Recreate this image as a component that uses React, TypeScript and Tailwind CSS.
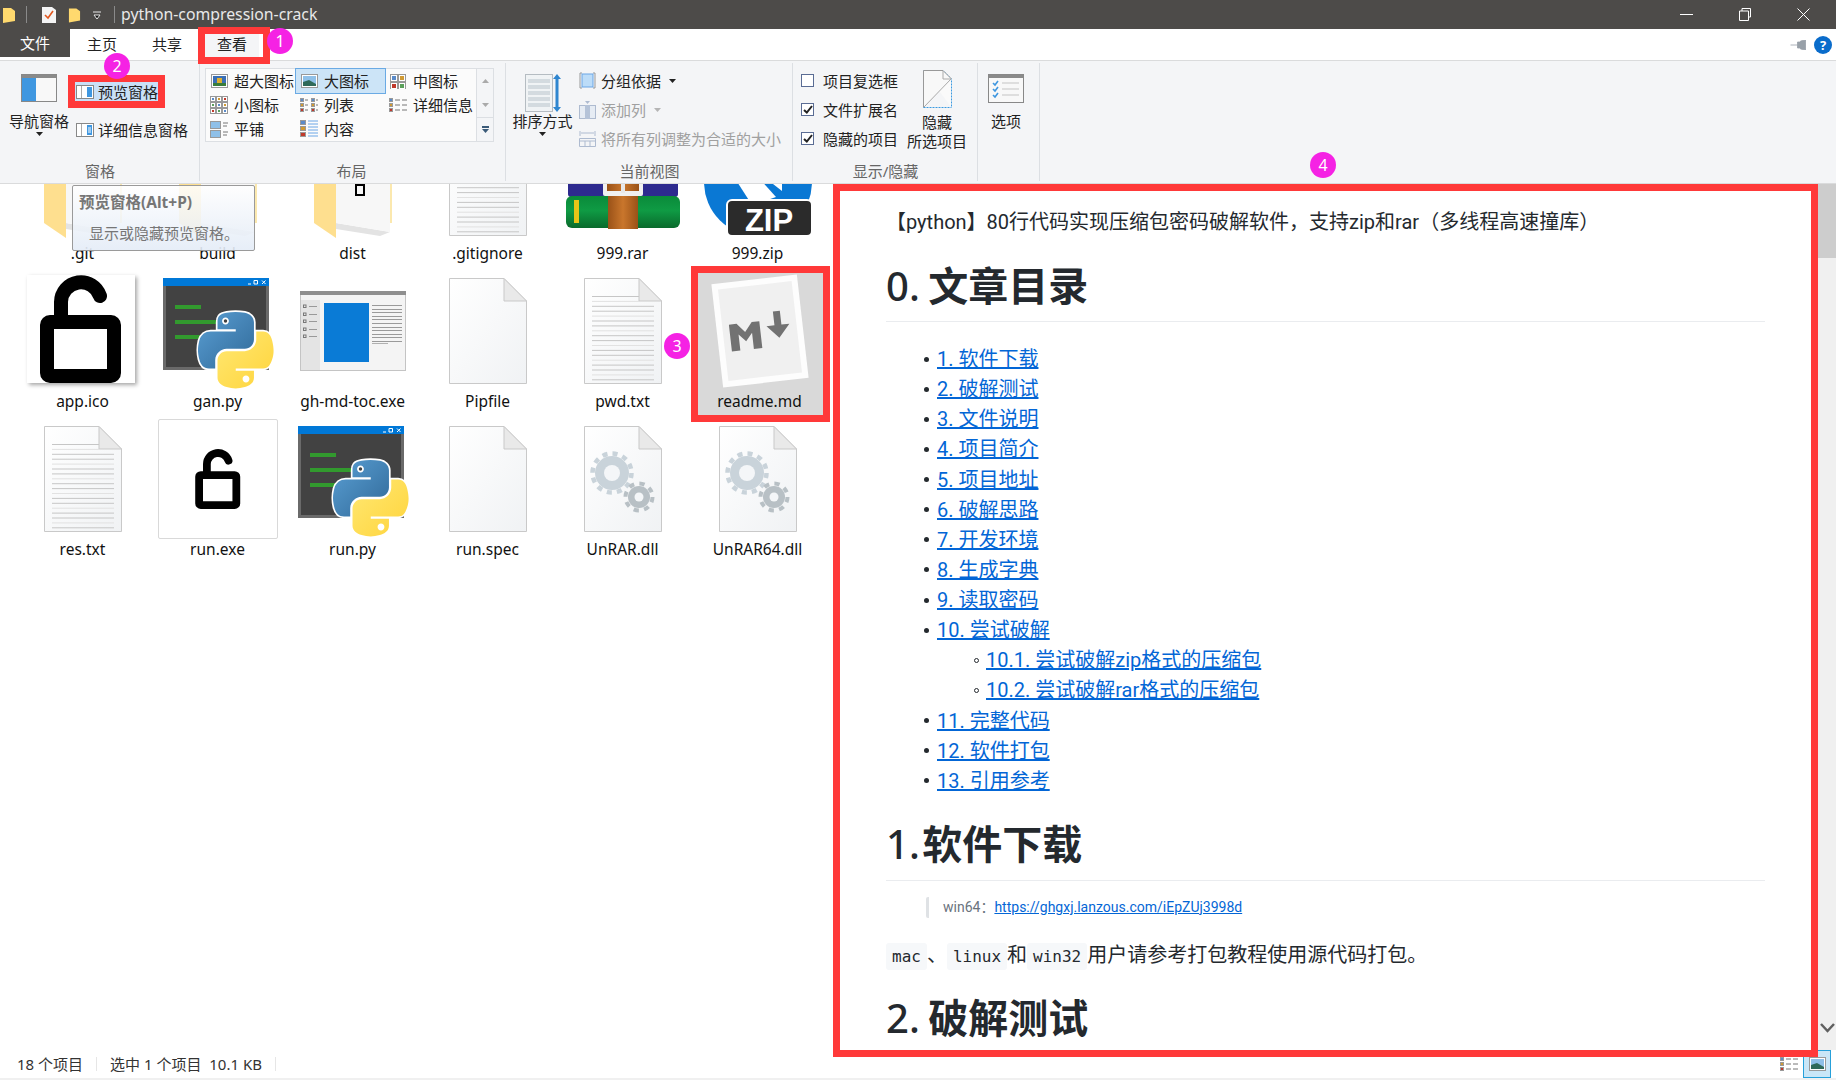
import React from 'react';

const tocItems = ['1. 软件下载', '2. 破解测试', '3. 文件说明', '4. 项目简介', '5. 项目地址', '6. 破解思路', '7. 开发环境', '8. 生成字典', '9. 读取密码', '10. 尝试破解'];
const tocTail = ['11. 完整代码', '12. 软件打包', '13. 引用参考'];

function Badge({ n, className }: { n: number; className: string }) {
  return (
    <div className={`absolute w-[26px] h-[26px] rounded-full bg-[#f522e4] text-white text-[16px] leading-[26px] text-center ${className}`}>{n}</div>
  );
}

function Doc({ lines, gears }: { lines?: boolean; gears?: boolean }) {
  const ys = Array.from({ length: 18 }, (_, i) => 18 + i * 4.9);
  return (
    <svg width="78" height="106" viewBox="0 0 78 106" className="mt-[5px]">
      <defs>
        <linearGradient id="docg" x1="0" y1="0" x2="1" y2="1">
          <stop offset="0" stopColor="#ffffff" />
          <stop offset="1" stopColor="#f0f2f4" />
        </linearGradient>
      </defs>
      <path d="M.5.5H55L77.5 23V105.5H.5Z" fill="url(#docg)" stroke="#c9c9c9" />
      {lines && ys.map((y, i) => <rect key={y} x="8" y={y} width={i < 2 ? 47 : 62} height="1" fill={i % 3 === 1 ? '#e2e2e2' : '#c6c6c6'} />)}
      <path d="M55 .5V23H77.5Z" fill="#e9e9e9" stroke="#c9c9c9" />
      {gears && (
        <g>
          <circle cx="28" cy="47" r="17" fill="#c9d3da" />
          <circle cx="28" cy="47" r="19.5" fill="none" stroke="#c9d3da" strokeWidth="4.5" strokeDasharray="5.1 5.1" />
          <circle cx="28" cy="47" r="8" fill="#f4f6f8" />
          <circle cx="55" cy="71" r="11" fill="#b8c0c5" />
          <circle cx="55" cy="71" r="13.5" fill="none" stroke="#b8c0c5" strokeWidth="4" strokeDasharray="5.3 5.3" />
          <circle cx="55" cy="71" r="4.5" fill="#f4f6f8" />
        </g>
      )}
    </svg>
  );
}

function Folder({ mark }: { mark?: boolean }) {
  return (
    <svg width="78" height="118" viewBox="0 0 78 118">
      <rect x="66" y="40" width="12" height="58" fill="#fbe8ae" />
      <path d="M22 98L76 107L66 111L22 104Z" fill="#e3e3e3" />
      <path d="M22 40H76V107L22 98Z" fill="#f7f7f7" />
      <path d="M0 40H22V113L0 98Z" fill="#fedf8f" />
      {mark && <rect x="42" y="60" width="8" height="10" fill="none" stroke="#000" strokeWidth="2" />}
    </svg>
  );
}

function Lock({ size }: { size: number }) {
  return (
    <svg width={size} height={size} viewBox="0 0 108 108">
      <rect x="20" y="47" width="67" height="54" rx="3" fill="#fff" stroke="#000" strokeWidth="14" />
      <path d="M34 42V27A20 20 0 0 1 73 21" fill="none" stroke="#000" strokeWidth="14" strokeLinecap="round" />
    </svg>
  );
}

function PyFile() {
  return (
    <svg width="112" height="112" viewBox="0 0 112 112" className="mt-[5px] ml-[2px]">
      <defs>
        <linearGradient id="pyb" x1="0" y1="0" x2="1" y2="1">
          <stop offset="0" stopColor="#5a9fd4" />
          <stop offset="1" stopColor="#306998" />
        </linearGradient>
        <linearGradient id="pyy" x1="0" y1="0" x2="1" y2="1">
          <stop offset="0" stopColor="#ffe873" />
          <stop offset="1" stopColor="#ffd43b" />
        </linearGradient>
      </defs>
      <rect x="0" y="0" width="106" height="92" fill="#6a6a6a" />
      <rect x="3" y="8" width="100" height="81" fill="#424242" />
      <rect x="0" y="0" width="106" height="8" fill="#0078d7" />
      <path d="M85 6h3M91 2.5h3.5v3.5h-3.5zM99 2.5l3.5 3.5m0-3.5l-3.5 3.5" stroke="#fff" strokeWidth="1" fill="none" />
      <rect x="12" y="27" width="26" height="4" fill="#329a2e" />
      <rect x="12" y="42" width="46" height="4" fill="#329a2e" />
      <rect x="12" y="57" width="36" height="4" fill="#329a2e" />
      <g transform="translate(35 34) scale(.68)">
        <path d="M54.919 0c-4.584.022-8.961.413-12.812 1.095C30.76 3.099 28.7 7.295 28.7 15.032v10.219h26.813v3.406H18.638c-7.793 0-14.616 4.684-16.75 13.594-2.462 10.213-2.571 16.586 0 27.25 1.906 7.938 6.458 13.594 14.25 13.594h9.219v-12.25c0-8.85 7.657-16.656 16.75-16.656h26.781c7.454 0 13.406-6.138 13.406-13.625v-25.531c0-7.266-6.13-12.725-13.406-13.937C64.281.328 59.502-.02 54.919 0zM40.419 8.22c2.77 0 5.031 2.299 5.031 5.125 0 2.816-2.262 5.094-5.031 5.094-2.779 0-5.031-2.277-5.031-5.094 0-2.826 2.252-5.125 5.031-5.125z" fill="url(#pyb)" stroke="#fff" strokeWidth="5" paintOrder="stroke" />
        <path d="M85.638 28.657v11.906c0 9.231-7.826 17-16.75 17H42.106c-7.336 0-13.406 6.278-13.406 13.625v25.531c0 7.266 6.319 11.54 13.406 13.625 8.487 2.496 16.626 2.947 26.781 0 6.75-1.954 13.406-5.888 13.406-13.625V86.5H55.513v-3.405H95.7c7.793 0 10.696-5.436 13.406-13.594 2.8-8.399 2.68-16.476 0-27.25-1.926-7.757-5.604-13.594-13.406-13.594H85.638zM70.575 93.32c2.779 0 5.031 2.277 5.031 5.094 0 2.826-2.252 5.125-5.031 5.125-2.77 0-5.031-2.299-5.031-5.125 0-2.816 2.262-5.094 5.031-5.094z" fill="url(#pyy)" stroke="#fff" strokeWidth="5" paintOrder="stroke" />
      </g>
    </svg>
  );
}

function ExeWindow() {
  return (
    <svg width="106" height="80" viewBox="0 0 106 80" className="mt-[18px]">
      <rect x=".5" y=".5" width="105" height="79" fill="#f4f4f4" stroke="#c4c4c4" />
      <rect x="0" y="0" width="106" height="4" fill="#8f8f8f" />
      <rect x="1" y="9" width="19" height="70" fill="#e4e4e4" />
      {[14, 22, 29, 37, 44].map((y) => (
        <g key={y}>
          <rect x="3.5" y={y} width="2.5" height="2.5" fill="none" stroke="#777" />
          <rect x="9" y={y + 1} width="8" height="1" fill="#999" />
        </g>
      ))}
      <rect x="24" y="12" width="45" height="59" fill="#0a7bd6" />
      {[14, 18, 21, 25, 28, 32, 36, 39, 43, 46, 50].map((y) => (
        <rect key={y} x="72" y={y} width="30" height="1" fill="#9a9a9a" />
      ))}
      <rect x="72" y="52" width="16" height="1" fill="#b0b0b0" />
    </svg>
  );
}

function Rar() {
  return (
    <svg width="116" height="112" viewBox="0 0 116 112">
      <defs>
        <linearGradient id="rarg" x1="0" y1="0" x2="0" y2="1">
          <stop offset="0" stopColor="#0a8a3a" />
          <stop offset=".45" stopColor="#0f9b44" />
          <stop offset="1" stopColor="#0a6a2c" />
        </linearGradient>
        <linearGradient id="raro" x1="0" y1="0" x2="1" y2="0">
          <stop offset="0" stopColor="#9a5218" />
          <stop offset=".5" stopColor="#c9762c" />
          <stop offset="1" stopColor="#9a5218" />
        </linearGradient>
      </defs>
      <rect x="3" y="55" width="110" height="17" rx="3" fill="#2d2a8f" />
      <rect x="1" y="71" width="114" height="32" rx="6" fill="url(#rarg)" />
      <rect x="9" y="75" width="5" height="23" fill="#e8c518" />
      <rect x="43" y="71" width="30" height="33" fill="url(#raro)" />
      <rect x="38" y="55" width="40" height="16" rx="2" fill="#f0f0f0" />
      <rect x="42" y="55" width="32" height="11" fill="url(#raro)" />
      <rect x="56" y="55" width="4" height="13" fill="#e8e8e8" />
    </svg>
  );
}

function Zip() {
  return (
    <svg width="108" height="112" viewBox="0 0 108 112">
      <circle cx="54" cy="57" r="54" fill="#0a78d4" />
      <path d="M30 52L54 52L72 72L48 80Z" fill="#fff" />
      <path d="M60 52L78 52L78 66Z" fill="#fff" />
      <rect x="23" y="75" width="85" height="36" rx="5" fill="#2b2b2b" stroke="#fff" strokeWidth="2" />
      <text x="65" y="106" textAnchor="middle" fontFamily="Liberation Sans" fontWeight="700" fontSize="31" fill="#fff">ZIP</text>
    </svg>
  );
}

function Md() {
  return (
    <svg width="100" height="116" viewBox="0 0 100 116">
      <g transform="translate(50 58) rotate(-6.5)">
        <rect x="-43" y="-52" width="86" height="104" fill="#fdfdfd" />
        <rect x="-37" y="-46" width="74" height="92" fill="#f0f0f0" />
        <path d="M-32 30V-5H-23L-14 7L-5 -5H4V30H-6V9L-14 19L-22 9V30Z" fill="#727272" transform="translate(-3 -6) scale(.85 .77)" />
        <path d="M15 -18H22V-4H30L18.5 9L7 -4H15Z" fill="#727272" />
      </g>
    </svg>
  );
}

function Cell({ name, selected, children }: { name: string; selected?: boolean; children: React.ReactNode }) {
  return (
    <div className={`${selected ? 'bg-[#d9d9d9] w-[129px]' : 'w-[125px]'} h-[142px] flex flex-col items-center`}>
      <div className="h-[118px] w-full flex justify-center items-start">{children}</div>
      <div className="leading-[20px] text-[15.5px] text-[#111]">{name}</div>
    </div>
  );
}

function Caret({ color = '#222' }: { color?: string }) {
  return (
    <svg width="7" height="4" viewBox="0 0 7 4"><path d="M0 0H7L3.5 4Z" fill={color} /></svg>
  );
}

function PaneIcon({ kind }: { kind: 'preview' | 'details' }) {
  return (
    <svg width="18" height="14" viewBox="0 0 18 14">
      <rect x=".5" y=".5" width="17" height="13" fill="#fff" stroke="#888" />
      <rect x="5" y="1" width="1" height="12" fill="#aaa" />
      <rect x="11" y="2" width="5" height="10" fill="#3f97e0" />
      {kind === 'details' && <path d="M12 5h3M12 7h3M12 9h3" stroke="#fff" />}
    </svg>
  );
}

function ViewIcon({ kind }: { kind: string }) {
  if (kind === 'xl' || kind === 'lg') {
    return (
      <svg width="17" height="14" viewBox="0 0 17 14">
        <rect x=".5" y=".5" width="16" height="13" fill="#fff" stroke="#999" />
        {kind === 'xl' ? (
          <g><rect x="2" y="2" width="13" height="10" fill="#3b6fb5" /><rect x="6" y="4" width="5" height="7" fill="#e0b030" /><rect x="2" y="9" width="13" height="3" fill="#3a7d3a" /></g>
        ) : (
          <g><rect x="2" y="2" width="13" height="10" fill="#8fc0e8" /><path d="M2 8L8 6L15 10V12H2Z" fill="#2f6a5a" /></g>
        )}
      </svg>
    );
  }
  const colors = ['#5b8bc9', '#d09a33', '#c0392b', '#5ba05b'];
  const grid = (n: number, s: number, gap: number) =>
    Array.from({ length: n * n }, (_, i) => (
      <rect key={i} x={(i % n) * (s + gap) + .5} y={Math.floor(i / n) * (s + gap) + .5} width={s} height={s} fill="#fff" stroke="#999" />
    ));
  if (kind === 'md') {
    return <svg width="17" height="15" viewBox="0 0 17 15">{grid(2, 7, 1)}{[0, 1, 2, 3].map((i) => <rect key={i} x={2 + (i % 2) * 8} y={2 + Math.floor(i / 2) * 8} width="4" height="4" fill={colors[i]} />)}</svg>;
  }
  if (kind === 'sm') {
    return <svg width="18" height="18" viewBox="0 0 18 18">{grid(3, 5, 1)}{Array.from({ length: 9 }, (_, i) => <rect key={i} x={2 + (i % 3) * 6} y={2 + Math.floor(i / 3) * 6} width="2" height="2" fill={colors[i % 4]} />)}</svg>;
  }
  const rows = [0, 1, 2];
  if (kind === 'list') {
    return <svg width="18" height="15" viewBox="0 0 18 15">{rows.map((r) => [0, 1].map((c) => <g key={`${r}${c}`}><rect x={c * 11 + .5} y={r * 5 + .5} width="3" height="3" fill={colors[r]} stroke="#999" /><path d={`M${c * 11 + 5} ${r * 5 + 2}h3`} stroke="#777" /></g>))}</svg>;
  }
  if (kind === 'details') {
    return <svg width="18" height="15" viewBox="0 0 18 15">{rows.map((r) => <g key={r}><rect x=".5" y={r * 5 + .5} width="3" height="3" fill={colors[r]} stroke="#999" /><path d={`M6 ${r * 5 + 2}h5M13 ${r * 5 + 2}h5`} stroke="#777" /></g>)}</svg>;
  }
  if (kind === 'tiles') {
    return <svg width="18" height="17" viewBox="0 0 18 17">{[0, 1].map((r) => <g key={r}><rect x=".5" y={r * 9 + .5} width="10" height="7" fill="#8fc0e8" stroke="#999" /><path d={`M13 ${r * 9 + 2}h5M13 ${r * 9 + 5}h4`} stroke="#777" /></g>)}</svg>;
  }
  return <svg width="18" height="18" viewBox="0 0 18 18">{rows.map((r) => <g key={r}><rect x=".5" y={r * 6 + .5} width="5" height="4" fill={colors[r]} stroke="#999" /><path d={`M8 ${r * 6 + 1}h10M8 ${r * 6 + 4}h10`} stroke="#6aa6e6" /></g>)}</svg>;
}

function ViewItem({ kind, label, active }: { kind: string; label: string; active?: boolean }) {
  return (
    <div className={`flex items-center h-[24px] pl-[3px] gap-[5px] whitespace-nowrap ${active ? 'bg-[#cce4f7] outline outline-[#6aaae4]' : ''}`}>
      <span className="w-[20px] flex justify-center"><ViewIcon kind={kind} /></span>
      <span>{label}</span>
    </div>
  );
}

function Check({ on, label }: { on?: boolean; label: string }) {
  return (
    <div className="flex items-center h-[29px] gap-[9px]">
      <span className="w-[13px] h-[13px] bg-white border border-[#5a6c94] flex items-center justify-center">
        {on && <svg width="10" height="9" viewBox="0 0 10 9"><path d="M1 5L3.8 7.5L9 1" fill="none" stroke="#222" strokeWidth="2" /></svg>}
      </span>
      <span>{label}</span>
    </div>
  );
}

function Group({ label, className, children }: { label: string; className: string; children: React.ReactNode }) {
  return (
    <div className={`relative h-full shrink-0 flex flex-col ${className}`}>
      <div className="flex-1 flex">{children}</div>
      <div className="h-[26px] pt-[2px] leading-[24px] text-center text-[#666]">{label}</div>
      <div className="absolute right-0 top-[2px] bottom-[2px] w-px bg-[#dcdfe3]" />
    </div>
  );
}

function Toc({ label }: { label: string }) {
  return (
    <li className="h-[30.14px] leading-[30px] flex items-center">
      <span className="w-[5px] h-[5px] rounded-full bg-[#24292e] mr-[8px] ml-[-12px]" />
      <a className="text-[#0366d6] underline">{label}</a>
    </li>
  );
}

function SubToc({ label }: { label: string }) {
  return (
    <li className="h-[30.14px] leading-[30px] flex items-center pl-[50px]">
      <span className="w-[5px] h-[5px] rounded-full border border-[#24292e] mr-[7px] ml-[-12px]" />
      <a className="text-[#0366d6] underline">{label}</a>
    </li>
  );
}

function Heading({ num, title, className, numClass }: { num: string; title: string; className: string; numClass: string }) {
  return (
    <h1 className={`leading-[50px] text-[40px] font-bold text-[#24292e] border-b border-[#eaecef] whitespace-nowrap ${className}`}>
      <span className={`font-medium ${numClass}`}>{num}</span> {title}
    </h1>
  );
}

function Chip({ children }: { children: React.ReactNode }) {
  return (
    <code className="inline-block h-[27px] leading-[27px] px-[6px] rounded-[3px] bg-[#f6f8fa] text-[16px] font-['DejaVu_Sans_Mono',monospace]">{children}</code>
  );
}

export default function App() {
  return (
    <div className="relative h-screen w-full overflow-hidden flex flex-col bg-white text-[15px] text-[#222] font-['Noto_Sans','Noto_Sans_CJK_SC',sans-serif]">
      {/* title bar */}
      <div className="h-[29px] shrink-0 bg-[#4d4b49] flex items-center text-[#e8e8e8]">
        <svg width="14" height="18" viewBox="0 0 14 18" className="ml-[2px]"><path d="M1 2H9L13 5V15L1 17Z" fill="#ffd96e" /></svg>
        <div className="w-px h-[17px] bg-[#8a8a8a] ml-[10px]" />
        <svg width="14" height="18" viewBox="0 0 14 18" className="ml-[15px]"><path d="M0 1H10L14 4V17H0Z" fill="#f4f4f4" /><path d="M3 9L6 12L11 5" fill="none" stroke="#e2571e" strokeWidth="1.6" /></svg>
        <svg width="13" height="18" viewBox="0 0 14 18" className="ml-[12px]"><path d="M1 2H9L13 5V15L1 17Z" fill="#ffd96e" /></svg>
        <svg width="8" height="8" viewBox="0 0 8 8" className="ml-[12px]"><path d="M0 1H8M1 4H7L4 8Z" stroke="#e8e8e8" strokeWidth="1" fill="#111" /></svg>
        <div className="w-px h-[17px] bg-[#8a8a8a] ml-[13px]" />
        <span className="ml-[6px] text-[15.8px]">python-compression-crack</span>
        <div className="ml-auto flex items-center pr-[26px] gap-[46px]">
          <svg width="13" height="13" viewBox="0 0 13 13"><path d="M0 6.5H13" stroke="#fff" /></svg>
          <svg width="12" height="13" viewBox="0 0 12 13"><path d="M.5 3H9.5V12.5H.5ZM3 3V.5H11.5V9H9.5" fill="none" stroke="#fff" /></svg>
          <svg width="13" height="13" viewBox="0 0 13 13"><path d="M.5.5L12.5 12.5M12.5.5L.5 12.5" stroke="#fff" /></svg>
        </div>
      </div>

      {/* tabs */}
      <div className="h-[32px] shrink-0 border-b border-[#dadbdc] flex bg-white">
        <div className="w-[70px] h-[28px] bg-[#4d4b49] text-white text-center leading-[28px]">文件</div>
        <div className="flex pt-[1px]">
          <div className="w-[64px] text-center leading-[28px]">主页</div>
          <div className="w-[66px] text-center leading-[28px]">共享</div>
          <div className="w-[54px] h-[30px] ml-[5px] text-center leading-[28px] bg-[#f4f5f7]">查看</div>
        </div>
        <div className="ml-auto flex items-center pr-[4px] gap-[7px]">
          <svg width="17" height="10" viewBox="0 0 16 10"><path d="M0 5H7M7 2H10V1L15 0V10L10 9V8H7Z" fill="#98a0a8" stroke="#98a0a8" strokeWidth=".8" /></svg>
          <div className="w-[18px] h-[18px] rounded-full bg-[#0a6ccb] text-white text-[13px] font-bold leading-[18px] text-center">?</div>
        </div>
      </div>

      {/* ribbon */}
      <div className="h-[123px] shrink-0 bg-[#f4f5f7] flex border-b border-[#dadbdc] leading-[20px]">
        <Group label="窗格" className="w-[200px]">
          <div className="w-[78px] flex flex-col items-center pt-[13px]">
            <svg width="36" height="28" viewBox="0 0 36 28">
              <rect x=".5" y=".5" width="35" height="27" fill="#f8f8f8" stroke="#888" />
              <rect x="1" y="1" width="34" height="3" fill="#8a8a8a" />
              <rect x="1" y="4" width="14" height="23" fill="#3f97e0" />
            </svg>
            <div className="mt-[9px]">导航窗格</div>
            <div className="mt-[1px] leading-[0]"><Caret /></div>
          </div>
          <div className="pt-[14px] flex flex-col ml-[-2px]">
            <div className="flex items-center gap-[4px] h-[33px] bg-[#c9e0f7] w-[83px] pl-[1px] ml-[-1px]"><PaneIcon kind="preview" /><span>预览窗格</span></div>
            <div className="flex items-center gap-[4px] h-[33px] mt-[5px] whitespace-nowrap"><PaneIcon kind="details" /><span>详细信息窗格</span></div>
          </div>
        </Group>

        <Group label="布局" className="w-[306px] pr-[3px]">
          <div className="pl-[5px] pt-[7px] flex items-start">
            <div className="w-[272px] h-[74px] bg-[#fbfbfb] border border-[#dcdfe3] grid grid-cols-[90px_89px_91px] grid-rows-[24px_24px_24px]">
              <ViewItem kind="xl" label="超大图标" />
              <ViewItem kind="lg" label="大图标" active />
              <ViewItem kind="md" label="中图标" />
              <ViewItem kind="sm" label="小图标" />
              <ViewItem kind="list" label="列表" />
              <ViewItem kind="details" label="详细信息" />
              <ViewItem kind="tiles" label="平铺" />
              <ViewItem kind="content" label="内容" />
            </div>
            <div className="w-[17px] h-[74px] border border-l-0 border-[#dcdfe3] flex flex-col items-center">
              <div className="h-[24px] flex items-center"><svg width="7" height="4" viewBox="0 0 7 4"><path d="M0 4H7L3.5 0Z" fill="#aaa" /></svg></div>
              <div className="h-[24px] flex items-center"><Caret color="#aaa" /></div>
              <div className="flex-1 w-full border-t border-[#dcdfe3] flex flex-col items-center justify-center gap-[1px]">
                <div className="w-[7px] h-[2px] bg-[#3a5a78]" />
                <Caret color="#3a5a78" />
              </div>
            </div>
          </div>
        </Group>

        <Group label="当前视图" className="w-[287px]">
          <div className="w-[73px] flex flex-col items-center pt-[13px]">
            <svg width="36" height="38" viewBox="0 0 36 38">
              <rect x=".5" y=".5" width="27" height="37" fill="#f0f3f5" stroke="#b5bcc2" />
              {[6, 12, 18, 24, 30].map((y) => <path key={y} d={`M3 ${y}H25M3 ${y + 2}H25`} stroke="#b7c2ca" />)}
              <path d="M32 0L36 5H33.5V33H36L32 38L28 33H30.5V5H28Z" fill="#2f86d0" />
            </svg>
            <div className="mt-[-1px] whitespace-nowrap">排序方式</div>
            <div className="mt-[1px] leading-[0]"><Caret /></div>
          </div>
          <div className="pt-[5px] whitespace-nowrap">
            <div className="flex items-center h-[29px] gap-[5px]">
              <svg width="17" height="17" viewBox="0 0 17 17"><path d="M3 1H1V16H3M14 1H16V16H14" fill="none" stroke="#999" /><rect x="3" y="2" width="11" height="13" fill="#bcdcf8" stroke="#6aa6e6" /></svg>
              <span>分组依据</span>
              <span className="ml-[3px] leading-[0]"><Caret /></span>
            </div>
            <div className="flex items-center h-[29px] gap-[5px] text-[#a0a0a0]">
              <svg width="17" height="18" viewBox="0 0 17 18"><rect x=".5" y="4.5" width="16" height="13" fill="#e6ecf4" stroke="#aebbd0" /><rect x="6" y="4" width="5" height="14" fill="#b5c3d8" /><path d="M6 0H11L8.5 3Z" fill="#aebbd0" /></svg>
              <span>添加列</span>
              <span className="ml-[3px] leading-[0]"><Caret color="#b5b5b5" /></span>
            </div>
            <div className="flex items-center h-[29px] gap-[5px] text-[#a0a0a0]">
              <svg width="17" height="17" viewBox="0 0 17 17"><path d="M1 1V6M16 1V6M2 3H15" stroke="#aebbd0" /><path d="M.5 8.5H16.5V16.5H.5ZM.5 11H16.5M6 11V16.5M11 11V16.5" fill="none" stroke="#aebbd0" /></svg>
              <span>将所有列调整为合适的大小</span>
            </div>
          </div>
        </Group>

        <Group label="显示/隐藏" className="w-[185px]">
          <div className="pl-[8px] pt-[5px] w-[113px] whitespace-nowrap">
            <Check label="项目复选框" />
            <Check on label="文件扩展名" />
            <Check on label="隐藏的项目" />
          </div>
          <div className="w-[62px] flex flex-col items-center pt-[9px] whitespace-nowrap">
            <svg width="29" height="38" viewBox="0 0 29 38">
              <path d="M.5.5H20L28.5 9V37.5" fill="#fafafa" stroke="#3b9ae1" strokeDasharray="2 1" />
              <path d="M.5 37.5V.5H20L28.5 9" fill="#f8f8f8" stroke="#999" />
              <path d="M.5 37.5H28.5" stroke="#3b9ae1" strokeDasharray="2 1" />
              <path d="M1 37L28 9M20 1V9H28" fill="none" stroke="#aaa" />
            </svg>
            <div className="mt-[5px] leading-[19px] text-center">隐藏<br />所选项目</div>
          </div>
        </Group>

        <Group label="" className="w-[62px] pr-[6px]">
          <div className="w-full flex flex-col items-center pt-[13px]">
            <svg width="36" height="29" viewBox="0 0 36 29">
              <rect x=".5" y=".5" width="35" height="28" fill="#f8f8f8" stroke="#888" />
              <rect x="1" y="1" width="34" height="3" fill="#8a8a8a" />
              {[9, 15, 21].map((y) => <g key={y}><path d={`M5 ${y}L7 ${y + 2}L10 ${y - 2}`} fill="none" stroke="#3f97e0" strokeWidth="1.6" /><path d={`M14 ${y}H31`} stroke="#c4c4c4" /></g>)}
            </svg>
            <div className="mt-[8px]">选项</div>
          </div>
        </Group>
      </div>

      {/* main */}
      <div className="flex-1 min-h-0 flex">
        <div className="w-[833px] shrink-0 overflow-hidden">
          <div className="mt-[-59px] pl-[20px] grid grid-cols-[repeat(6,125px)] grid-rows-[142px_142px_142px] gap-x-[10px] gap-y-[6px]">
            <Cell name=".git"><Folder /></Cell>
            <Cell name="build"><Folder /></Cell>
            <Cell name="dist"><Folder mark /></Cell>
            <Cell name=".gitignore"><Doc lines /></Cell>
            <Cell name="999.rar"><Rar /></Cell>
            <Cell name="999.zip"><Zip /></Cell>

            <Cell name="app.ico"><div className="mt-[2px] ml-[-3px] shadow-[2px_2px_4px_rgba(0,0,0,0.35)]"><Lock size={108} /></div></Cell>
            <Cell name="gan.py"><PyFile /></Cell>
            <Cell name="gh-md-toc.exe"><ExeWindow /></Cell>
            <Cell name="Pipfile"><Doc /></Cell>
            <Cell name="pwd.txt"><Doc lines /></Cell>
            <Cell name="readme.md" selected><Md /></Cell>

            <Cell name="res.txt"><Doc lines /></Cell>
            <Cell name="run.exe">
              <div className="w-[120px] h-[120px] shrink-0 mt-[-2px] border border-[#d9d9d9] rounded-[2px] flex items-center justify-center"><Lock size={60} /></div>
            </Cell>
            <Cell name="run.py"><PyFile /></Cell>
            <Cell name="run.spec"><Doc /></Cell>
            <Cell name="UnRAR.dll"><Doc gears /></Cell>
            <Cell name="UnRAR64.dll"><Doc gears /></Cell>
          </div>
        </div>

        <div className="flex-1 min-w-0 overflow-hidden pl-[53px] pr-[53px] text-[20px] text-[#24292e]">
          <p className="mt-[23px] leading-[30px] whitespace-nowrap font-['Roboto','Noto_Sans_CJK_SC',sans-serif]">【python】80行代码实现压缩包密码破解软件，支持zip和rar（多线程高速撞库）</p>
          <Heading num="0." title="文章目录" numClass="mr-[-2px]" className="mt-[24px] h-[61px]" />
          <ul className="mt-[22px] pl-[50px] font-['Roboto','Noto_Sans_CJK_SC',sans-serif]">
            {tocItems.map((t) => <Toc key={t} label={t} />)}
            <SubToc label="10.1. 尝试破解zip格式的压缩包" />
            <SubToc label="10.2. 尝试破解rar格式的压缩包" />
            {tocTail.map((t) => <Toc key={t} label={t} />)}
          </ul>
          <Heading num="1." title="软件下载" numClass="mr-[-8px]" className="mt-[23px] h-[62px]" />
          <div className="mt-[16px] ml-[40px] h-[21px] border-l-[3px] border-[#dfe2e5] rounded-[2px] pl-[14px] text-[14px] leading-[21px] text-[#6a737d] whitespace-nowrap font-['Roboto','Noto_Sans_CJK_SC',sans-serif]">
            win64：<a className="text-[#0366d6] underline">https://ghgxj.lanzous.com/iEpZUj3998d</a>
          </div>
          <p className="mt-[23px] h-[27px] leading-[27px] whitespace-nowrap"><Chip>mac</Chip>、<Chip>linux</Chip>和<Chip>win32</Chip>用户请参考打包教程使用源代码打包。</p>
          <h1 className="mt-[25px] leading-[50px] text-[40px] font-bold whitespace-nowrap"><span className="font-medium mr-[-2px]">2.</span> 破解测试</h1>
        </div>

        <div className="w-[18px] shrink-0 bg-[#f0f0f0] flex flex-col items-center">
          <div className="w-full h-[74px] bg-[#cdcdcd]" />
          <svg width="15" height="10" viewBox="0 0 15 10" className="mt-auto mb-[17px]"><path d="M1 1L7.5 8L14 1" fill="none" stroke="#606060" strokeWidth="2.5" /></svg>
        </div>
      </div>

      {/* status bar */}
      <div className="h-[30px] shrink-0 border-b-2 border-[#f0f0f0] flex items-center text-[15px] text-[#333] pl-[17px] whitespace-nowrap">
        <span>18 个项目</span>
        <span className="w-px h-[14px] bg-[#e6e6e6] mx-[13px]" />
        <span>选中 1 个项目&nbsp;&nbsp;10.1 KB</span>
        <span className="w-px h-[14px] bg-[#e6e6e6] ml-[13px]" />
        <div className="ml-auto flex items-center pr-[5px] gap-[5px] h-full">
          <ViewIcon kind="details" />
          <div className="w-[28px] h-full bg-[#c9e6f7] border border-[#26a0da] flex items-center justify-center"><ViewIcon kind="lg" /></div>
        </div>
      </div>

      {/* tooltip */}
      <div className="absolute left-[72px] top-[185px] w-[183px] h-[66px] rounded-[2px] border border-[#9a9a9a] bg-gradient-to-b from-[#ffffffd9] to-[#e4ecf7e6] text-[#767676]">
        <div className="ml-[6px] mt-[6px] font-bold text-[15.5px] leading-[20px]">预览窗格(Alt+P)</div>
        <div className="ml-[16px] mt-[11px] text-[15px] leading-[20px] whitespace-nowrap">显示或隐藏预览窗格。</div>
      </div>

      {/* annotations */}
      <div className="absolute left-[198px] top-[27px] w-[72px] h-[37px] border-[7px] border-[#ff3939]" />
      <div className="absolute left-[68px] top-[75px] w-[97px] h-[33px] border-[7px] border-[#ff3939]" />
      <div className="absolute left-[691px] top-[266px] w-[139px] h-[156px] border-[7px] border-[#ff3939]" />
      <div className="absolute left-[833px] top-[184px] w-[985px] h-[873px] border-[7px] border-[#ff3939]" />
      <Badge n={1} className="left-[267px] top-[28px]" />
      <Badge n={2} className="left-[104px] top-[53px]" />
      <Badge n={3} className="left-[664px] top-[333px]" />
      <Badge n={4} className="left-[1310px] top-[152px]" />
    </div>
  );
}
